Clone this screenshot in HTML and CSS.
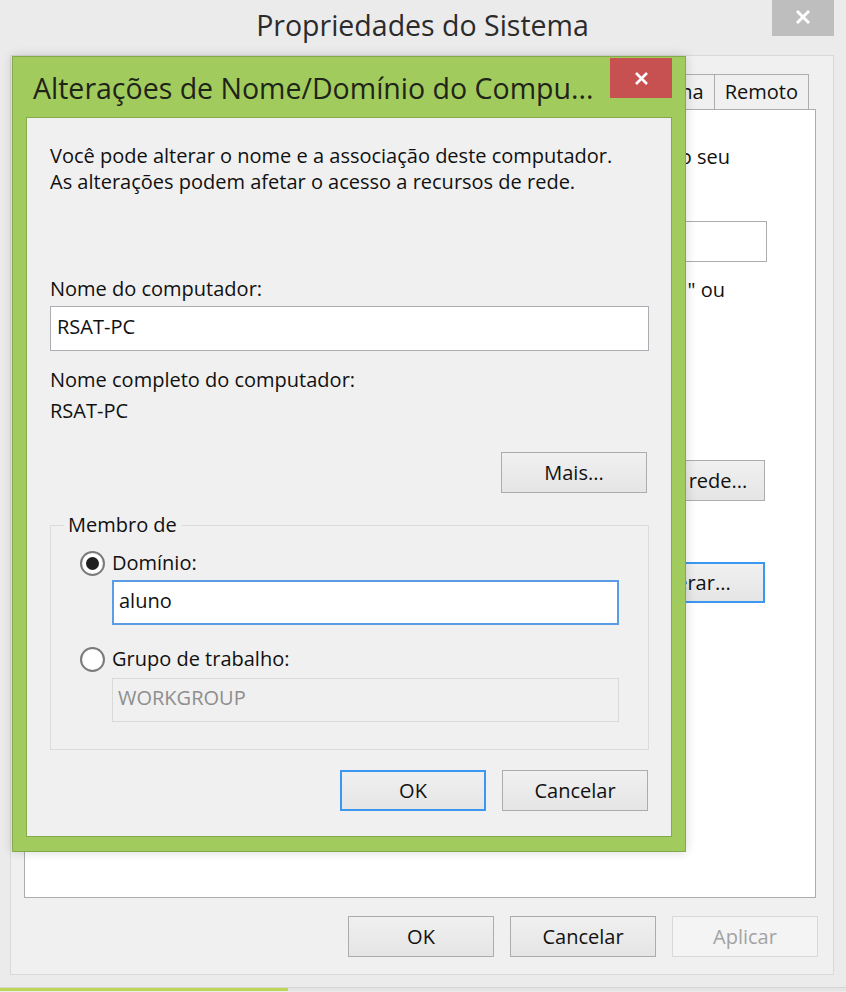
FILE: index.html
```html
<!DOCTYPE html>
<html lang="pt-BR">
<head>
<meta charset="utf-8">
<title>Propriedades do Sistema</title>
<link rel="stylesheet" href="styles.css">
</head>
<body>
<div class="window">
  <header class="win-titlebar">
    <span class="win-spacer"></span>
    <h1 class="win-title">Propriedades do Sistema</h1>
    <div class="win-close" aria-label="Fechar">
      <svg class="x-icon" width="16" height="16" viewBox="0 0 16 16"><path d="M2 2 L14 14 M14 2 L2 14" stroke="#fff" stroke-width="3" fill="none"/></svg>
    </div>
  </header>
  <div class="win-client">
    <div class="tabs">
      <div class="tab tab-hidden"></div>
      <div class="tab">Sistema</div>
      <div class="tab">Remoto</div>
    </div>
    <div class="tab-panel">
      <p class="pn-line pn-l1">o seu</p>
      <div class="pn-row">
        <span class="pn-input"></span>
      </div>
      <p class="pn-line pn-ex">" ou</p>
      <div class="pn-btn-row pn-btn-first"><button class="btn pn-btn">ID de rede...</button></div>
      <div class="pn-btn-row pn-btn-second"><button class="btn btn-default pn-btn">Alterar...</button></div>
    </div>
    <div class="win-buttons">
      <button class="btn win-btn">OK</button>
      <button class="btn win-btn">Cancelar</button>
      <button class="btn win-btn" disabled>Aplicar</button>
    </div>
  </div>
</div>
<div class="taskbar"><div class="taskbar-active"></div></div>

<div class="dialog">
  <div class="dlg-titlebar">
    <div class="dlg-title">Alterações de Nome/Domínio do Compu...</div>
    <div class="dlg-close" aria-label="Fechar">
      <svg class="x-icon" width="15" height="15" viewBox="0 0 15 15"><path d="M2 2 L13 13 M13 2 L2 13" stroke="#fff" stroke-width="2.6" fill="none"/></svg>
    </div>
  </div>
  <div class="dlg-content">
    <p class="dlg-intro">Você pode alterar o nome e a associação deste computador.<br>As alterações podem afetar o acesso a recursos de rede.</p>
    <div class="field-label label-name">Nome do computador:</div>
    <div class="textbox tb-name">RSAT-PC</div>
    <div class="field-label label-full">Nome completo do computador:</div>
    <div class="field-value">RSAT-PC</div>
    <div class="more-row"><button class="btn dlg-btn">Mais...</button></div>
    <fieldset class="group">
      <legend class="group-legend">Membro de</legend>
      <div class="radio-row radio-first">
        <span class="radio radio-checked"><span class="radio-dot"></span></span>
        <span class="radio-label">Domínio:</span>
      </div>
      <div class="textbox tb-sub tb-focus">aluno</div>
      <div class="radio-row radio-second">
        <span class="radio"></span>
        <span class="radio-label">Grupo de trabalho:</span>
      </div>
      <div class="textbox tb-sub tb-disabled">WORKGROUP</div>
    </fieldset>
    <div class="dlg-buttons">
      <button class="btn dlg-btn btn-default">OK</button>
      <button class="btn dlg-btn">Cancelar</button>
    </div>
  </div>
</div>
</body>
</html>
```

FILE: styles.css
```css
* { box-sizing: border-box; }

html, body {
  margin: 0;
  padding: 0;
}

body {
  width: 846px;
  height: 992px;
  overflow: hidden;
  position: relative;
  background: #ebebeb;
  font-family: "Open Sans", "Noto Sans", sans-serif;
  font-size: 20px;
  line-height: 26px;
  color: #111;
}

/* ---------- background window ---------- */
.window {
  height: 988px;
  display: flex;
  flex-direction: column;
  border-bottom: 1px solid #d6d6d6;
}

.win-titlebar {
  height: 55px;
  flex: 0 0 55px;
  display: grid;
  grid-template-columns: 73px 1fr 62px;
  padding-right: 12px;
  align-items: start;
}

.win-title {
  margin: 0;
  padding-top: 6px;
  text-align: center;
  font-weight: 400;
  font-size: 28.5px;
  line-height: 38px;
  color: #2b2b2b;
}

.win-close {
  width: 62px;
  height: 36px;
  background: #bebebe;
  display: flex;
  align-items: center;
  justify-content: center;
  padding-bottom: 3px;
}

.win-client {
  flex: 1;
  margin: 0 12px 13px 10px;
  border: 1px solid #d9d9d9;
  background: #f0f0f0;
  padding: 18px 17px 17px 13px;
  display: flex;
  flex-direction: column;
}

.tabs {
  height: 36px;
  display: flex;
  justify-content: flex-end;
  padding-right: 7px;
  overflow: hidden;
  margin-bottom: -1px;
}

.tab {
  border: 1px solid #adadad;
  border-bottom: none;
  background: #f0f0f0;
  padding: 4px 10px 0 10px;
  margin-left: -1px;
  white-space: nowrap;
  color: #111;
}

.tab-hidden { flex: 1; }

.tab-panel {
  height: 789px;
  background: #fff;
  border: 1px solid #adadad;
  padding: 34px 48px 0 13px;
}

.pn-line {
  margin: 0;
  white-space: nowrap;
  line-height: 26px;
}

.pn-l1 { text-align: right; padding-right: 37px; }
.pn-ex { text-align: right; padding-right: 42px; margin-top: 15px; }

.pn-row {
  margin-top: 51px;
  height: 41px;
  display: flex;
  align-items: center;
  justify-content: flex-end;
}

.pn-input {
  width: 480px;
  height: 41px;
  border: 1px solid #adadad;
  background: #fff;
}

.pn-btn-row {
  display: flex;
  justify-content: flex-end;
  padding-right: 2px;
}

.pn-btn-first { margin-top: 157px; }
.pn-btn-second { margin-top: 61px; }

.pn-btn { width: 148px; }

.win-buttons {
  margin-top: 18px;
  margin-right: -2px;
  display: flex;
  justify-content: flex-end;
  gap: 16px;
}

.win-btn { width: 146px; }

.taskbar {
  height: 3px;
  background: #e4e4e4;
}

.taskbar-active {
  width: 288px;
  height: 3px;
  background: #bcd655;
}

/* ---------- buttons ---------- */
.btn {
  height: 41px;
  border: 1px solid #acacac;
  background: linear-gradient(#f0f0f0, #e5e5e5);
  font-family: inherit;
  font-size: 20px;
  color: #111;
  padding: 0;
  margin: 0;
}

.btn-default {
  border: 2px solid #3c97f0;
}

.btn:disabled {
  border-color: #d9d9d9;
  background: #f4f4f4;
  color: #a3a3a3;
}

/* ---------- dialog ---------- */
.dialog {
  position: absolute;
  left: 12px;
  top: 56px;
  width: 674px;
  height: 796px;
  background: #a2cb5e;
  border: 1px solid #86a84d;
  box-shadow: 0 0 10px rgba(0, 0, 0, 0.16);
  padding: 0 13px 14px 13px;
  display: flex;
  flex-direction: column;
}

.dlg-titlebar {
  height: 60px;
  display: flex;
  align-items: flex-start;
}

.dlg-title {
  flex: 1;
  padding: 12px 0 0 7px;
  font-size: 28.5px;
  line-height: 38px;
  color: #1f2418;
  white-space: nowrap;
  overflow: hidden;
}

.dlg-close {
  width: 62px;
  height: 40px;
  margin-top: 1px;
  background: #c75050;
  display: flex;
  align-items: center;
  justify-content: center;
}

.dlg-content {
  flex: 1;
  background: #f0f0f0;
  border: 1px solid #87a94e;
  padding: 25px 22px 0 23px;
}

.dlg-intro {
  margin: 0;
  line-height: 26px;
}

.field-label { line-height: 26px; }
.label-name { margin-top: 81px; }
.label-full { margin-top: 16px; }
.field-value { margin-top: 5px; line-height: 26px; }

.textbox {
  height: 45px;
  border: 1px solid #abadb3;
  background: #fff;
  padding: 0 6px;
  display: flex;
  align-items: center;
  padding-bottom: 4px;
}

.tb-name { margin-top: 4px; }

.more-row {
  margin-top: 28px;
  display: flex;
  justify-content: flex-end;
  padding-right: 2px;
}

.dlg-btn { width: 146px; }

.group {
  margin: 19px 0 0 0;
  padding: 0 29px 27px 29px;
  border: 1px solid #dcdcdc;
  min-width: 0;
}

.group-legend {
  padding: 0 4px;
  margin-left: -16px;
  line-height: 26px;
}

.radio-row {
  display: flex;
  align-items: center;
  gap: 7px;
  height: 26px;
}

.radio-first { margin-top: 12px; }
.radio-second { margin-top: 21px; }

.radio {
  width: 25px;
  height: 25px;
  border-radius: 50%;
  border: 2px solid #7a7a7a;
  background: radial-gradient(circle, #ffffff 55%, #e8e8e8 100%);
  display: flex;
  align-items: center;
  justify-content: center;
  flex: 0 0 25px;
}

.radio-dot {
  width: 13px;
  height: 13px;
  border-radius: 50%;
  background: #1f1f1f;
}

.tb-sub {
  margin-left: 32px;
  padding-left: 5px;
}

.tb-focus {
  margin-top: 4px;
  border-color: #5a9de6;
  border-width: 2px;
}

.tb-disabled {
  margin-top: 6px;
  height: 44px;
  background: #f0f0f0;
  border-color: #d9d9d9;
  color: #8e8e8e;
}

.dlg-buttons {
  margin-top: 20px;
  display: flex;
  justify-content: flex-end;
  gap: 16px;
  padding-right: 1px;
}
```
